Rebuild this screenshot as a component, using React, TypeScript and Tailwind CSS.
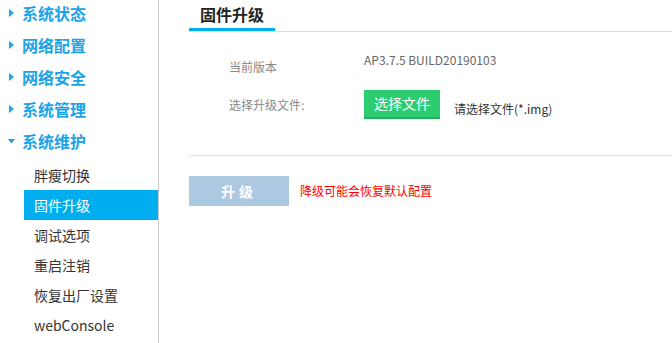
import React from 'react';

const FONT = { fontFamily: '"Noto Sans CJK SC", "Liberation Sans", sans-serif' };

const GROUPS = ['系统状态', '网络配置', '网络安全', '系统管理'];
const SUB_ITEMS = ['胖瘦切换', '固件升级', '调试选项', '重启注销', '恢复出厂设置', 'webConsole'];

const Arrow: React.FC<{ open?: boolean }> = ({ open }) => (
  <svg width="8" height="8" viewBox="0 0 8 8" className="mr-[6px] shrink-0">
    {open ? <polygon points="0,2 7,2 3.5,6.5" fill="#1aa3e8" /> : <polygon points="1,0 6,4 1,8" fill="#1aa3e8" />}
  </svg>
);

const Sidebar: React.FC = () => (
  <div className="w-[159px] shrink-0 h-[343px] border-r border-[#cfcfcf] overflow-hidden">
    <div className="-mt-[3px]">
      {GROUPS.map(g => (
        <div key={g} className="h-8 flex items-center pl-2 text-[16px] font-bold text-[#1aa3e8]">
          <Arrow />
          {g}
        </div>
      ))}
      <div className="h-8 flex items-center pl-2 text-[16px] font-bold text-[#1aa3e8]">
        <Arrow open />
        系统维护
      </div>
    </div>
    <div className="ml-6 mt-[3px]">
      {SUB_ITEMS.map(s => (
        <div
          key={s}
          className={`h-[30px] flex items-center pl-[10px] text-[14px] ${
            s === '固件升级' ? 'bg-[#00aeef] text-white' : 'text-[#333]'
          }`}
        >
          {s}
        </div>
      ))}
    </div>
  </div>
);

export default function App() {
  return (
    <div className="w-[672px] h-[343px] flex bg-white overflow-hidden" style={FONT}>
      <Sidebar />
      <div className="flex-1">
        {/* Tab header */}
        <div className="ml-[30px] h-8 border-b border-[#dddddd] flex items-start">
          <div className="h-[31px] px-[11px] border-b-[3px] border-[#00aeef] text-[16px] font-bold leading-[28px] text-[#222]">
            固件升级
          </div>
        </div>

        {/* Form */}
        <div className="ml-[70px] mt-5">
          <div className="flex h-[38px]">
            <div className="w-[135px] pt-[7px] text-[12px] leading-4 text-[#888]">当前版本</div>
            <div className="text-[12px] leading-4 text-[#666]">AP3.7.5 BUILD20190103</div>
          </div>
          <div className="flex items-center h-[29px]">
            <div className="w-[135px] text-[12px] text-[#888]">选择升级文件:</div>
            <button className="h-[29px] w-[76px] bg-[#2ecc71] border-b-2 border-[#27ae60] text-white text-[14px] flex items-center justify-center">
              选择文件
            </button>
            <span className="ml-[14px] mt-2 text-[12px] text-[#333]">请选择文件(*.img)</span>
          </div>
        </div>

        <div className="ml-[30px] mt-9 border-t border-[#dddddd]" />

        <div className="ml-[30px] mt-5 flex items-center">
          <button className="w-[100px] h-[30px] bg-[#adc9e1] text-white text-[14px] font-bold tracking-[4px]">
            升级
          </button>
          <span className="ml-[11px] text-[12px] text-[#ff0000]">降级可能会恢复默认配置</span>
        </div>
      </div>
    </div>
  );
}
